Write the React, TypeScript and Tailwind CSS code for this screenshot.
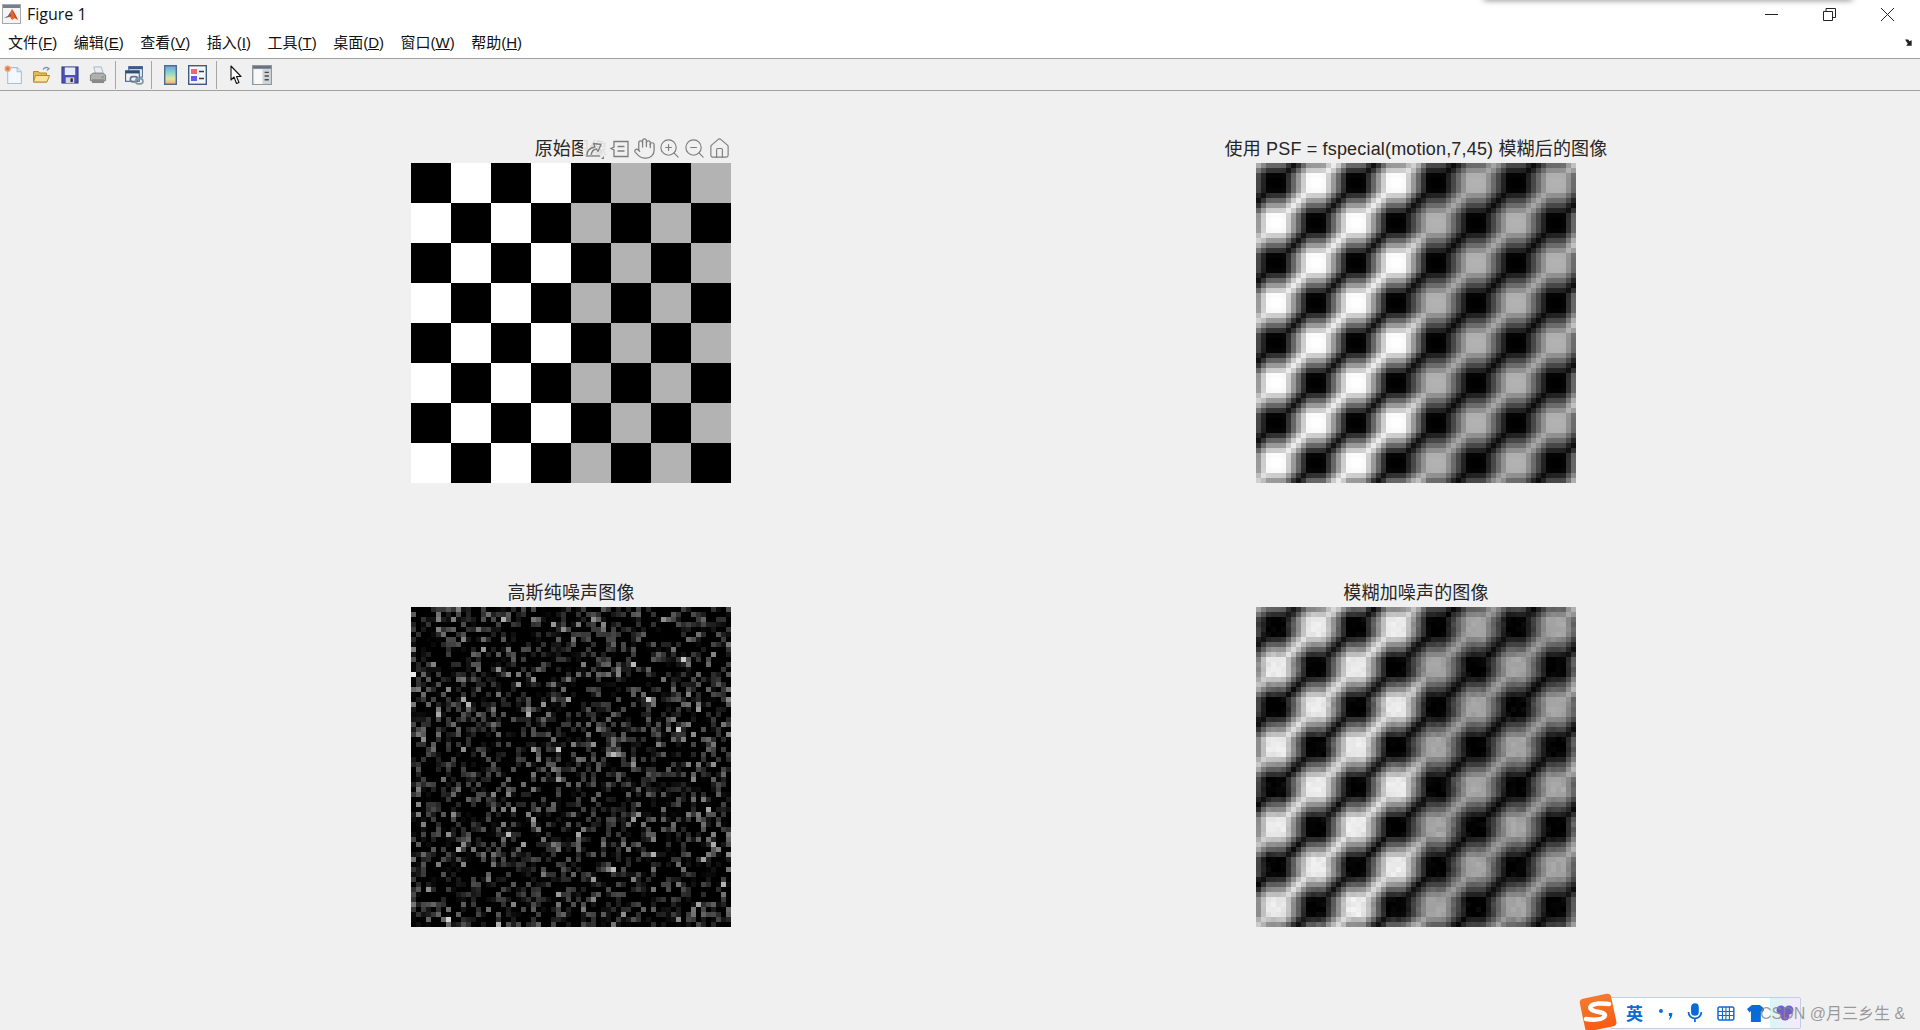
import { Hand, Home, ZoomIn, ZoomOut } from "lucide-react";

const N = 64;
const MENUS = [
  ["文件", "F"],
  ["编辑", "E"],
  ["查看", "V"],
  ["插入", "I"],
  ["工具", "T"],
  ["桌面", "D"],
  ["窗口", "W"],
  ["帮助", "H"],
];

// seeded normal generator, so every render gives the same noise
function makeRandn(seed: number) {
  let s = seed;
  const u = () => {
    s = (Math.imul(s, 1664525) + 1013904223) >>> 0;
    return (s + 0.5) / 4294967296;
  };
  return () => Math.sqrt(-2 * Math.log(u())) * Math.cos(2 * Math.PI * u());
}

function checkerboard() {
  const img: number[][] = [];
  for (let y = 0; y < N; y++) {
    const row: number[] = [];
    for (let x = 0; x < N; x++) {
      const odd = (Math.floor(x / 8) + Math.floor(y / 8)) % 2 === 1;
      row.push(odd ? (x >= 32 ? 0.7 : 1) : 0);
    }
    img.push(row);
  }
  return img;
}

// same construction as fspecial('motion', 7, 45)
function motionKernel() {
  const half = 3;
  const c = Math.cos(Math.PI / 4);
  const s = Math.sin(Math.PI / 4);
  const size = 3;
  const q: number[][] = [];
  for (let y = 0; y <= size; y++) {
    const row: number[] = [];
    for (let x = 0; x <= size; x++) {
      let d = y * c - x * s;
      if (Math.hypot(x, y) >= half && Math.abs(d) <= 1) {
        const x2 = half - Math.abs((x + d * s) / c);
        d = Math.hypot(d, x2);
      }
      row.push(Math.max(0, 1 - Math.abs(d)));
    }
    q.push(row);
  }
  const k: [number, number, number][] = [];
  let sum = 0;
  for (let y = -size; y <= size; y++) {
    for (let x = -size; x <= size; x++) {
      if (x * y < 0) continue;
      const v = q[Math.abs(y)][Math.abs(x)];
      if (v > 0) {
        k.push([x, -y, v]);
        sum += v;
      }
    }
  }
  return k.map(([x, y, v]) => [x, y, v / sum] as [number, number, number]);
}

function blur(img: number[][]) {
  const k = motionKernel();
  return img.map((row, y) =>
    row.map((_, x) => {
      let v = 0;
      for (const [dx, dy, w] of k) v += w * img[(y + dy + N) % N][(x + dx + N) % N];
      return v;
    }),
  );
}

function noiseImage() {
  const randn = makeRandn(20231);
  const img: number[][] = [];
  for (let y = 0; y < N; y++) {
    const row: number[] = [];
    for (let x = 0; x < N; x++) row.push(Math.min(1, Math.max(0, randn() * 0.24)));
    img.push(row);
  }
  img[13][0] = 0.92;
  return img;
}

function noisyBlur(img: number[][]) {
  const randn = makeRandn(771);
  return img.map((row) =>
    row.map((v) => Math.min(1, Math.max(0, v * 0.93 + randn() * 0.014))),
  );
}

const CHECKER = checkerboard();
const BLURRED = blur(CHECKER);
const NOISE = noiseImage();
const NOISY = noisyBlur(BLURRED);

function Pixels({ data }: { data: number[][] }) {
  return (
    <svg width={320} height={320} viewBox="0 0 64 64" shapeRendering="crispEdges" className="block">
      {data.map((row, y) =>
        row.map((v, x) => {
          const g = Math.round(v * 255);
          return <rect key={x} x={x} y={y} width={1} height={1} fill={`rgb(${g},${g},${g})`} />;
        }),
      )}
    </svg>
  );
}

function AxesToolbar() {
  const cls = "w-[23px] h-[23px] text-[#7d7d7d]";
  return (
    <div className="absolute right-0 top-[-26px] flex items-center gap-[2px] h-[23px] bg-[#f0f0f0]/90">
      <svg viewBox="0 0 23 23" className={cls} fill="none" stroke="currentColor" strokeWidth="1.3">
        <path d="M3 19h14" />
        <path d="M4 18c0-4 2-7 8-8l-1.500-3.500 7.500 1-3 7-1.500-2.500c-3 .5-5 3-5.500 6" strokeLinejoin="round" />
        <path d="M21 22v-3l-3 3z" fill="currentColor" stroke="none" />
      </svg>
      <svg viewBox="0 0 23 23" className={cls} fill="none" stroke="currentColor" strokeWidth="1.3">
        <path d="M6 4.500h14v15H6V13L3 11.500 6 10z" />
        <path d="M9.500 9.500h7M9.500 14h7" />
      </svg>
      <Hand className={cls} strokeWidth={1.3} />
      <ZoomIn className={cls} strokeWidth={1.2} />
      <ZoomOut className={cls} strokeWidth={1.2} />
      <Home className={cls} strokeWidth={1.2} />
    </div>
  );
}

function Plot({ title, data, tools }: { title: string; data: number[][]; tools?: boolean }) {
  return (
    <div className="flex flex-col w-[320px]">
      <div className="h-[26px] pt-[1px] flex items-start justify-center text-[18px] leading-[22px] tracking-[0.17px] text-[#262626] whitespace-nowrap">
        {title}
      </div>
      <div className="relative">
        <Pixels data={data} />
        {tools && <AxesToolbar />}
      </div>
    </div>
  );
}

function MatlabIcon() {
  return (
    <svg width="19" height="20" viewBox="0 0 19 20" className="shrink-0">
      <rect x="0.500" y="0.500" width="18" height="19" fill="#f4f4f4" stroke="#a8a8a8" />
      <rect x="1" y="1" width="17" height="3" fill="#6f8196" />
      <path d="M2 14l4-2 4-7 3 5 3 6-3-2-3 2-2-3z" fill="#e8642a" />
      <path d="M2 14l4-2 2-3 1 3-3 1z" fill="#2f6fb5" />
      <path d="M10 5l3 5 3 6-3-2z" fill="#c9491c" />
    </svg>
  );
}

function NewIcon() {
  return (
    <svg width="20" height="20" viewBox="0 0 19 19">
      <path d="M3.500 2.500h9l4 4v11h-13z" fill="#f3f8fd" stroke="#a4c0dc" />
      <path d="M12.500 2.500v4h4" fill="#dce9f5" stroke="#a4c0dc" />
      <circle cx="3.500" cy="3.500" r="3" fill="#f0a070" />
      <circle cx="3.500" cy="3.500" r="1.300" fill="#e8662e" />
    </svg>
  );
}

function OpenIcon() {
  return (
    <svg width="19" height="20" viewBox="0 0 19 19">
      <path d="M11 4c1.500-2 4-2.500 6-1l-2 2" fill="none" stroke="#7f97ad" strokeWidth="1.300" />
      <path d="M1.500 6h5l1 1.500h7v9h-13z" fill="#e3b955" stroke="#b58a2c" />
      <path d="M1.500 16.500l2-6.500h14l-2.500 6.500z" fill="#fbe39c" stroke="#b58a2c" />
    </svg>
  );
}

function SaveIcon() {
  return (
    <svg width="18" height="20" viewBox="0 0 19 19">
      <rect x="1" y="1" width="17" height="17" fill="#4a53b4" stroke="#2d3480" />
      <rect x="4" y="1.500" width="11" height="8" fill="#e8ecf7" />
      <rect x="5" y="12" width="9" height="6" fill="#d8d8e0" />
      <rect x="10" y="13" width="2.500" height="4" fill="#2b2b3c" />
    </svg>
  );
}

function PrintIcon() {
  return (
    <svg width="18" height="20" viewBox="0 0 19 19">
      <path d="M5 1h8l2 7H7z" fill="#e6eef6" stroke="#a9b6c2" />
      <path d="M1.500 9.500l3-2h10l3 2v6h-16z" fill="#b0b0b0" stroke="#7d7d7d" />
      <rect x="3" y="14" width="13" height="4" fill="#8a8a8a" />
      <rect x="13" y="11" width="3" height="1.500" fill="#6fa86f" />
    </svg>
  );
}

function LinkIcon() {
  return (
    <svg width="20" height="20" viewBox="0 0 19 19">
      <rect x="4.500" y="1.500" width="13" height="10" fill="#e8edf3" stroke="#53708f" />
      <rect x="4.500" y="1.500" width="13" height="2.500" fill="#3d5c80" />
      <rect x="1.500" y="5.500" width="13" height="10" fill="#eef2f6" stroke="#3d5c80" />
      <rect x="1.500" y="5.500" width="13" height="2.500" fill="#2e4d73" />
      <rect x="6" y="11" width="7" height="5" rx="2.500" fill="none" stroke="#647a8e" strokeWidth="1.600" />
      <rect x="11" y="13" width="7" height="5" rx="2.500" fill="none" stroke="#8297a8" strokeWidth="1.600" />
    </svg>
  );
}

function ColorbarIcon() {
  return (
    <svg width="13" height="20" viewBox="0 0 13 20">
      <defs>
        <linearGradient id="cbar" x1="0" y1="0" x2="0" y2="1">
          <stop offset="0" stopColor="#6f9fe0" />
          <stop offset="0.4" stopColor="#8fd8c8" />
          <stop offset="0.7" stopColor="#e6e49a" />
          <stop offset="1" stopColor="#f0a878" />
        </linearGradient>
      </defs>
      <rect x="0.700" y="0.700" width="11.600" height="18.600" fill="url(#cbar)" stroke="#4f6a8c" strokeWidth="1.400" />
    </svg>
  );
}

function LegendIcon() {
  return (
    <svg width="19" height="20" viewBox="0 0 19 20">
      <rect x="0.700" y="0.700" width="17.600" height="18.600" fill="#f4f6f9" stroke="#3f5c80" strokeWidth="1.400" />
      <rect x="3" y="4" width="6" height="5" fill="#ec6a6a" />
      <rect x="3" y="11" width="6" height="5" fill="#5a64dc" />
      <path d="M11 6.500h5M11 13.500h5" stroke="#3a3a3a" strokeWidth="1.300" />
    </svg>
  );
}

function CursorIcon() {
  return (
    <svg width="12" height="20" viewBox="0 0 12 20">
      <path d="M1 1v14l3-3 2.500 6.500 2.500-1-2.500-6H11z" fill="#fff" stroke="#111" strokeWidth="1.100" strokeLinejoin="round" />
    </svg>
  );
}

function BrowserIcon() {
  return (
    <svg width="20" height="20" viewBox="0 0 19 19">
      <rect x="0.500" y="0.500" width="18" height="18" fill="#cfd4d8" stroke="#8f969c" />
      <rect x="1" y="1" width="17" height="2.500" fill="#64727f" />
      <rect x="2" y="4" width="8" height="14" fill="#f8f8f8" />
      <path d="M12 7h4M12 10.500h4M12 14h4" stroke="#4a4a4a" strokeWidth="1.400" />
    </svg>
  );
}

function Separator({ className }: { className: string }) {
  return <div className={`w-px h-[28px] bg-[#a6a6a6] ${className}`} />;
}

function Toolbar() {
  return (
    <div className="h-[33px] flex items-center bg-[#f0f0f0] border-t border-b border-[#a0a0a0]">
      <div className="ml-[4px]"><NewIcon /></div>
      <div className="ml-[8px]"><OpenIcon /></div>
      <div className="ml-[10px]"><SaveIcon /></div>
      <div className="ml-[10px]"><PrintIcon /></div>
      <Separator className="ml-[8px]" />
      <div className="ml-[8px]"><LinkIcon /></div>
      <Separator className="ml-[7px]" />
      <div className="ml-[12px]"><ColorbarIcon /></div>
      <div className="ml-[11px]"><LegendIcon /></div>
      <Separator className="ml-[9px]" />
      <div className="ml-[13px]"><CursorIcon /></div>
      <div className="ml-[10px]"><BrowserIcon /></div>
    </div>
  );
}

function TitleBar() {
  return (
    <div className="h-[30px] flex items-center bg-white relative">
      <div className="absolute left-[1484px] top-[-5px] w-[368px] h-[5px] bg-[#cfcfcf] shadow-[0_0_6px_rgba(0,0,0,0.55)]" />
      <div className="ml-[2px] -mt-[3px]"><MatlabIcon /></div>
      <span className="ml-[6px] -mt-[3px] text-[16px] text-[#111] font-['Open_Sans',sans-serif]">Figure 1</span>
      <div className="ml-auto flex pr-[3px] -mt-[2px]">
        <div className="w-[58px] flex justify-center">
          <svg width="13" height="13" viewBox="0 0 13 13"><path d="M0 6.500h13" stroke="#222" /></svg>
        </div>
        <div className="w-[58px] flex justify-center">
          <svg width="13" height="13" viewBox="0 0 13 13" fill="none" stroke="#222">
            <path d="M.5 3.500h9v9h-9z" />
            <path d="M3 3.500V.5h9.500v9H9.500" />
          </svg>
        </div>
        <div className="w-[59px] flex justify-center">
          <svg width="13" height="13" viewBox="0 0 13 13" stroke="#222"><path d="M0 0l13 13M13 0L0 13" /></svg>
        </div>
      </div>
    </div>
  );
}

function MenuBar() {
  return (
    <div className="h-[28px] pb-[1px] flex items-center bg-white pl-[8px] gap-[16.500px] text-[15px] text-[#111]">
      {MENUS.map(([label, key]) => (
        <span key={key} className="whitespace-nowrap">
          {label}(<u>{key}</u>)
        </span>
      ))}
      <svg width="10" height="9" viewBox="0 0 9 8" className="ml-auto mr-[5px]">
        <path d="M0 0.500l3 0 1 1.500 2-1 0 5-5 0 1.500-1.800z" fill="#222" />
      </svg>
    </div>
  );
}

function ImeBar() {
  return (
    <div className="absolute left-[1579px] top-[993px] h-[37px] flex items-end">
      <svg width="40" height="37" viewBox="0 0 40 37" className="relative z-10 shrink-0">
        <defs>
          <linearGradient id="sg" x1="0" y1="0" x2="0" y2="1">
            <stop offset="0" stopColor="#f47a30" />
            <stop offset="1" stopColor="#fb5a12" />
          </linearGradient>
        </defs>
        <rect x="3" y="3" width="32" height="33" rx="4" fill="url(#sg)" transform="rotate(-12 19 19)" />
        <path d="M30 11c-6-1-15-1-18 2-2 3 1 5 8 6 6 1 7 3 5 5-3 3-11 3-18 2" fill="none" stroke="#fff" strokeWidth="4.500" strokeLinecap="round" />
      </svg>
      <div className="-ml-[9px] w-[191px] h-[32px] mb-[1px] bg-white border border-[#bcd0e6] rounded-[2px] flex items-center text-[#0a6ad6]">
        <span className="ml-[15px] text-[17px] font-bold font-['Noto_Sans_CJK_SC',sans-serif]">英</span>
        <svg width="16" height="16" viewBox="0 0 16 16" className="ml-[15px]" fill="currentColor">
          <circle cx="3" cy="6" r="2" />
          <path d="M11 8h3.500c0 3-1 5.500-3.500 7 1-2 1-3.500 1-4h-1z" />
        </svg>
        <svg width="16" height="20" viewBox="0 0 16 20" className="ml-[13px]" fill="none" stroke="currentColor" strokeWidth="1.800">
          <rect x="5" y="1" width="6" height="11" rx="3" fill="currentColor" />
          <path d="M1.500 9a6.500 6.500 0 0013 0M8 15.500V19" />
        </svg>
        <svg width="18" height="15" viewBox="0 0 18 15" className="ml-[14px]" fill="none" stroke="currentColor" strokeWidth="1.500">
          <rect x="1" y="1" width="16" height="13" rx="1.500" />
          <path d="M1 5.500h16M1 9.500h16M5.500 1v13M9 1v13M12.500 1v13" strokeWidth="1.100" />
        </svg>
        <svg width="18" height="17" viewBox="0 0 18 17" className="ml-[12px]" fill="currentColor">
          <path d="M5 0h8l5 4-2.500 3.500L14 6v11H4V6L2.500 7.500 0 4z" />
        </svg>
        <div className="ml-[6px] w-[30px] h-[30px] flex items-center justify-center bg-linear-to-r from-[#d8f6f6] to-[#f8e8fb]">
          <svg width="18" height="16" viewBox="0 0 18 16" fill="#6a62c8">
            <circle cx="5" cy="5" r="4.500" />
            <circle cx="13" cy="5" r="4.500" />
            <circle cx="9" cy="11" r="4.500" fill="#8458c0" />
          </svg>
        </div>
      </div>
    </div>
  );
}

export default function App() {
  return (
    <div className="relative w-[1920px] h-[1030px] overflow-hidden flex flex-col bg-[#f0f0f0] font-['Liberation_Sans','Noto_Sans_CJK_SC',sans-serif]">
      <TitleBar />
      <MenuBar />
      <Toolbar />
      <div className="grid grid-cols-[320px_320px] gap-x-[525px] gap-y-[98px] pl-[411px] pt-[46px]">
        <Plot title="原始图像" data={CHECKER} tools />
        <Plot title="使用 PSF = fspecial(motion,7,45) 模糊后的图像" data={BLURRED} />
        <Plot title="高斯纯噪声图像" data={NOISE} />
        <Plot title="模糊加噪声的图像" data={NOISY} />
      </div>
      <ImeBar />
      <span className="absolute left-[1760px] top-[1002px] text-[16px] text-[#8a8a8a]/85 whitespace-nowrap">
        CSDN @月三乡生 &amp;
      </span>
    </div>
  );
}
